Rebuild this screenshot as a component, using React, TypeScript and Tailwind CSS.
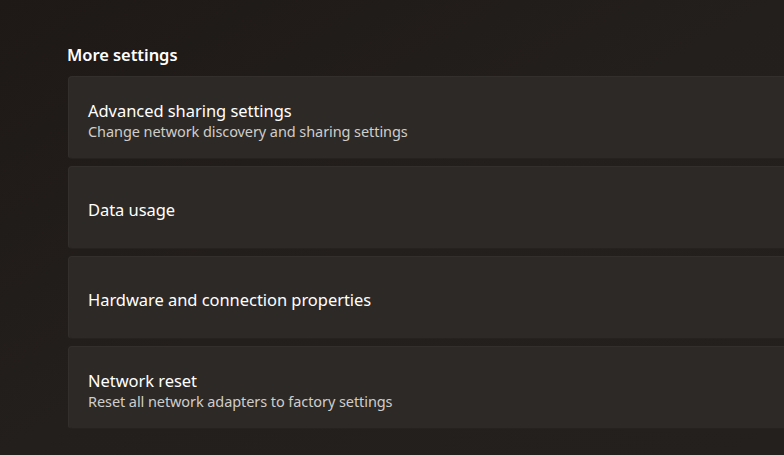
import React from "react";

const items = [
  { title: "Advanced sharing settings", sub: "Change network discovery and sharing settings" },
  { title: "Data usage" },
  { title: "Hardware and connection properties" },
  { title: "Network reset", sub: "Reset all network adapters to factory settings" },
];

export default function App() {
  return (
    <div
      className="w-[784px] h-[455px] overflow-hidden bg-gradient-to-br from-[#1e1917] via-[#231f1c] to-[#24201d] text-white"
      style={{ fontFamily: '"Noto Sans", "Open Sans", sans-serif' }}
    >
      <div className="pl-[67px] pt-[43px] w-[800px]">
        <h2 className="text-[16.5px] font-semibold leading-[24px] mb-[9px] tracking-[-0.05px]">More settings</h2>
        <div className="flex flex-col gap-[7px] pl-px">
          {items.map((it) => (
            <div
              key={it.title}
              className="h-[83px] rounded-[4px] bg-[#2d2926] border border-[#332f2c] border-b-[#26221f] flex flex-col justify-center pl-[19px] pt-[5px]"
            >
              <div className="text-[16.5px] leading-[22px] text-[#ffffff] tracking-[-0.05px]">{it.title}</div>
              {it.sub && (
                <div className="text-[14.5px] leading-[19px] text-[#d0cdca] tracking-[-0.08px]">{it.sub}</div>
              )}
            </div>
          ))}
        </div>
      </div>
    </div>
  );
}
